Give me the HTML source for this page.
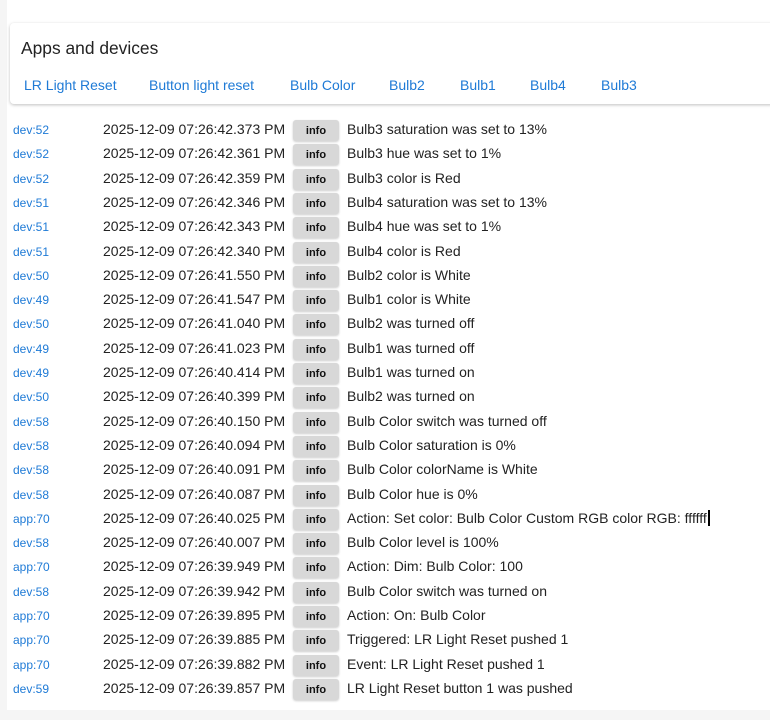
<!DOCTYPE html>
<html><head><style>
body{margin:0;width:770px;height:720px;background:#f5f5f5;font-family:"Liberation Sans",Roboto,sans-serif;overflow:hidden;position:relative}
.main{position:absolute;left:7px;top:0;width:763px;height:710px;background:#fff}
.card{position:absolute;left:10px;top:23px;width:770px;height:81px;background:#fff;border-radius:4px;box-shadow:0 1px 3px rgba(0,0,0,.25)}
.card h2{position:absolute;left:11px;top:15px;margin:0;font-weight:normal;font-size:17.4px;color:#222}
.card a{position:absolute;top:54px;font-size:14px;color:#1e7ad6;white-space:nowrap}
.row{position:absolute;left:0;height:24px;width:770px;font-size:14px;color:#222}
.row .d{position:absolute;left:13px;top:3px;font-size:12px;color:#1e7ad6}
.row .t{position:absolute;left:103px;top:1px}
.row .b{position:absolute;left:293px;top:0px;width:46px;height:21px;background:#d8d8d8;border-radius:3px;box-shadow:0 1px 2px rgba(0,0,0,.2);font-size:11px;font-weight:bold;text-align:center;line-height:23px;color:#111}
.row .m{position:absolute;left:347px;top:1px;white-space:nowrap}
</style></head><body>
<div class="main"></div>
<div class="card"><h2>Apps and devices</h2>
<a style="left:14px">LR Light Reset</a><a style="left:139px">Button light reset</a><a style="left:280px">Bulb Color</a><a style="left:379px">Bulb2</a><a style="left:450px">Bulb1</a><a style="left:520px">Bulb4</a><a style="left:591px">Bulb3</a></div>
<div id="rows"></div>
<script>
const r=[["dev:52","2025-12-09 07:26:42.373 PM","Bulb3 saturation was set to 13%"],["dev:52","2025-12-09 07:26:42.361 PM","Bulb3 hue was set to 1%"],["dev:52","2025-12-09 07:26:42.359 PM","Bulb3 color is Red"],["dev:51","2025-12-09 07:26:42.346 PM","Bulb4 saturation was set to 13%"],["dev:51","2025-12-09 07:26:42.343 PM","Bulb4 hue was set to 1%"],["dev:51","2025-12-09 07:26:42.340 PM","Bulb4 color is Red"],["dev:50","2025-12-09 07:26:41.550 PM","Bulb2 color is White"],["dev:49","2025-12-09 07:26:41.547 PM","Bulb1 color is White"],["dev:50","2025-12-09 07:26:41.040 PM","Bulb2 was turned off"],["dev:49","2025-12-09 07:26:41.023 PM","Bulb1 was turned off"],["dev:49","2025-12-09 07:26:40.414 PM","Bulb1 was turned on"],["dev:50","2025-12-09 07:26:40.399 PM","Bulb2 was turned on"],["dev:58","2025-12-09 07:26:40.150 PM","Bulb Color switch was turned off"],["dev:58","2025-12-09 07:26:40.094 PM","Bulb Color saturation is 0%"],["dev:58","2025-12-09 07:26:40.091 PM","Bulb Color colorName is White"],["dev:58","2025-12-09 07:26:40.087 PM","Bulb Color hue is 0%"],["app:70","2025-12-09 07:26:40.025 PM","Action: Set color: Bulb Color Custom RGB color RGB: ffffff<span style='border-left:2px solid #000;margin-left:1px'></span>"],["dev:58","2025-12-09 07:26:40.007 PM","Bulb Color level is 100%"],["app:70","2025-12-09 07:26:39.949 PM","Action: Dim: Bulb Color: 100"],["dev:58","2025-12-09 07:26:39.942 PM","Bulb Color switch was turned on"],["app:70","2025-12-09 07:26:39.895 PM","Action: On: Bulb Color"],["app:70","2025-12-09 07:26:39.885 PM","Triggered: LR Light Reset pushed 1"],["app:70","2025-12-09 07:26:39.882 PM","Event: LR Light Reset pushed 1"],["dev:59","2025-12-09 07:26:39.857 PM","LR Light Reset button 1 was pushed"]];
let h="";r.forEach((x,i)=>{h+=`<div class="row" style="top:${120+i*24.3}px"><span class="d">${x[0]}</span><span class="t">${x[1]}</span><span class="b">info</span><span class="m">${x[2]}</span></div>`});
document.getElementById("rows").innerHTML=h;
</script>
</body></html>
